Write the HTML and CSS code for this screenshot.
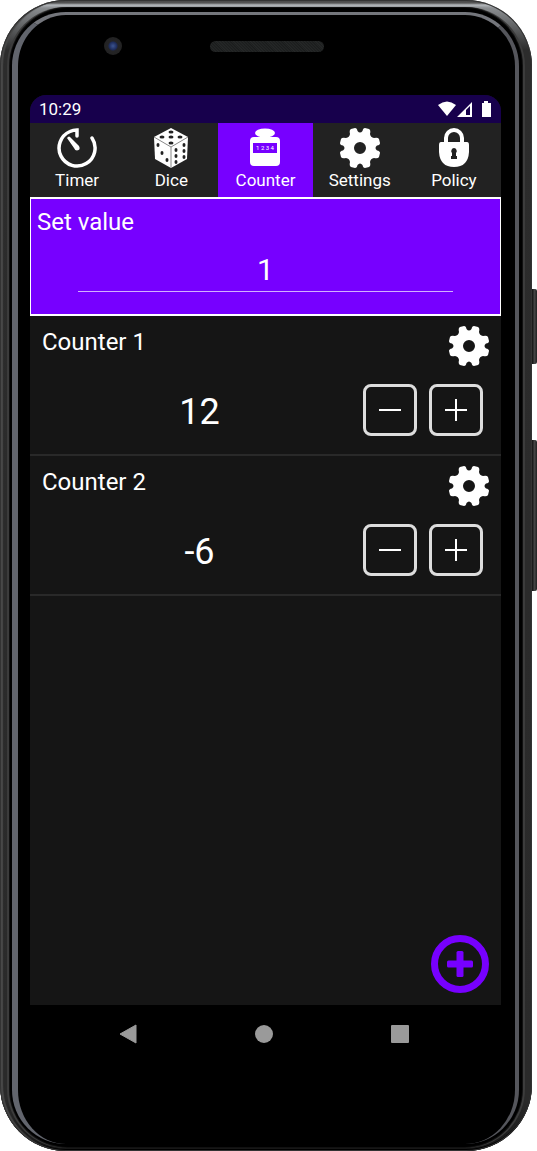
FILE: index.html
```html
<!DOCTYPE html>
<html lang="en">
<head>
  <meta charset="UTF-8">
  <meta name="viewport" content="width=device-width, initial-scale=1">
  <title>Counter</title>
  <link rel="stylesheet" href="styles.css">
</head>
<body>
  <!-- shared icons -->
  <svg class="defs" width="0" height="0" aria-hidden="true">
    <symbol id="gear" viewBox="0 0 40 40">
      <path fill="#fff" fill-rule="evenodd" d="M11 1 L15 0 Q17 0 17.500 3 Q20 6 22.500 3 Q23 0 25 0 L29 1 Q31 2 30 6 Q30.500 9.500 34 10 Q38 9 39 11 L40 15 Q40 17 37 17.500 Q34 20 37 22.500 Q40 23 40 25 L39 29 Q38 31 34 30 Q30.500 30.500 30 34 Q31 38 29 39 L25 40 Q23 40 22.500 37 Q20 34 17.500 37 Q17 40 15 40 L11 39 Q9 38 10 34 Q9.500 30.500 6 30 Q2 31 1 29 L0 25 Q0 23 3 22.500 Q6 20 3 17.500 Q0 17 0 15 L1 11 Q2 9 6 10 Q9.500 9.500 10 6 Q9 2 11 1 Z M20 14 A6 6 0 1 0 20 26 A6 6 0 1 0 20 14 Z"/>
    </symbol>
  </svg>

  <div class="phone">
    <div class="rim">
      <div class="glass">
        <div class="top">
          <div class="camera"></div>
          <div class="speaker"></div>
        </div>

        <main class="screen">
          <div class="status">
            <span>10:29</span>
            <svg width="54" height="18" viewBox="0 0 54 18" aria-hidden="true">
              <path fill="#fff" d="M0 5 Q9 -2 18 5 L9 16 Z"/>
              <path fill="#fff" fill-rule="evenodd" d="M19 17 L34 2 V17 Z M28 10 V15 H32 V6 Z"/>
              <path fill="#fff" d="M44 3 H46 V1 H50 V3 H53 V17 H44 Z"/>
            </svg>
          </div>

          <nav class="tabs">
            <button>
              <svg width="40" height="40" viewBox="0 0 40 40" aria-hidden="true">
                <path fill="none" stroke="#fff" stroke-width="3.500" stroke-linecap="round" d="M35 10 A18 18 0 1 1 13 3.500 Q16 2 20 2 V8"/>
                <path fill="#fff" d="M10 10 Q12 7 14 10 L22 18 Q24 22 20 22.500 Q18 22.500 17 20 Z"/>
              </svg>
              <span>Timer</span>
            </button>
            <button>
              <svg width="40" height="40" viewBox="0 0 40 40" aria-hidden="true">
                <path fill="#fff" d="M20 0 L37 9 L36 31 L20 40 L4 31 L3 9 Z"/>
                <path fill="none" stroke="#888" d="M3 9 L20 19 L37 9 M20 19 V40"/>
                <g fill="#222">
                  <ellipse cx="20" cy="4" rx="2.500" ry="1.500"/>
                  <ellipse cx="11" cy="9" rx="2.500" ry="1.500"/>
                  <ellipse cx="20" cy="9" rx="2.500" ry="1.500"/>
                  <ellipse cx="29" cy="9" rx="2.500" ry="1.500"/>
                  <ellipse cx="20" cy="15" rx="2.500" ry="1.500"/>
                  <ellipse cx="7" cy="17" rx="1.500" ry="2"/>
                  <ellipse cx="11" cy="25" rx="1.500" ry="2"/>
                  <ellipse cx="16" cy="32" rx="1.500" ry="2"/>
                  <ellipse cx="25" cy="22" rx="1.500" ry="2"/>
                  <ellipse cx="25" cy="28" rx="1.500" ry="2"/>
                  <ellipse cx="25" cy="34" rx="1.500" ry="2"/>
                  <ellipse cx="33" cy="17" rx="1.500" ry="2"/>
                  <ellipse cx="33" cy="23" rx="1.500" ry="2"/>
                  <ellipse cx="33" cy="29" rx="1.500" ry="2"/>
                </g>
              </svg>
              <span>Dice</span>
            </button>
            <button class="active" aria-current="page">
              <svg width="40" height="40" viewBox="0 0 40 40" aria-hidden="true">
                <ellipse cx="20" cy="5" rx="10" ry="4.500" fill="#fff"/>
                <path fill="#fff" d="M17 7 H23 V9 H31 Q35 9 35 13 V34 Q35 38 31 38 H9 Q5 38 5 34 V13 Q5 9 9 9 H17 Z"/>
                <rect x="8" y="15" width="24" height="10" fill="#7700ff"/>
                <text x="20" y="22" text-anchor="middle" class="digits">1 2 3 4</text>
              </svg>
              <span>Counter</span>
            </button>
            <button>
              <svg width="40" height="40" aria-hidden="true"><use href="#gear"/></svg>
              <span>Settings</span>
            </button>
            <button>
              <svg width="40" height="40" viewBox="0 0 40 40" aria-hidden="true">
                <path fill="none" stroke="#fff" stroke-width="4" d="M12 16 V10 A8 8 0 0 1 28 10 V16"/>
                <path fill="#fff" d="M7 14 H33 Q35 14 35 17 V24 Q34 39 20 39 Q6 39 5 24 V17 Q5 14 7 14 Z"/>
                <path fill="#222" d="M20 20 A3 3 0 0 1 22 25 V28 H23 V31 H17 V28 H18 V25 A3 3 0 0 1 20 20 Z"/>
              </svg>
              <span>Policy</span>
            </button>
          </nav>

          <section class="set-value">
            <label for="step">Set value</label>
            <input id="step" type="text" inputmode="numeric" value="1">
          </section>

          <section class="counter">
            <div class="counter-head">
              <h2>Counter 1</h2>
              <button class="gear" aria-label="Counter 1 settings"><svg width="40" height="40"><use href="#gear"/></svg></button>
            </div>
            <div class="counter-body">
              <output>12</output>
              <button class="step" aria-label="Decrease"><svg width="24" height="24" viewBox="0 0 24 24"><path d="M1 12 H23"/></svg></button>
              <button class="step" aria-label="Increase"><svg width="24" height="24" viewBox="0 0 24 24"><path d="M1 12 H23 M12 1 V23"/></svg></button>
            </div>
          </section>

          <section class="counter">
            <div class="counter-head">
              <h2>Counter 2</h2>
              <button class="gear" aria-label="Counter 2 settings"><svg width="40" height="40"><use href="#gear"/></svg></button>
            </div>
            <div class="counter-body">
              <output>-6</output>
              <button class="step" aria-label="Decrease"><svg width="24" height="24" viewBox="0 0 24 24"><path d="M1 12 H23"/></svg></button>
              <button class="step" aria-label="Increase"><svg width="24" height="24" viewBox="0 0 24 24"><path d="M1 12 H23 M12 1 V23"/></svg></button>
            </div>
          </section>

          <button class="add" aria-label="Add counter">
            <svg width="58" height="58" viewBox="0 0 58 58">
              <circle cx="29" cy="29" r="25.500" fill="none" stroke="#7700ff" stroke-width="7"/>
              <g fill="#7700ff">
                <rect x="16" y="25.500" width="26" height="7" rx="1.500"/>
                <rect x="25.500" y="16" width="7" height="26" rx="1.500"/>
              </g>
            </svg>
          </button>
        </main>

        <div class="system-nav">
          <button aria-label="Back"><svg width="20" height="20" viewBox="0 0 20 20"><path stroke="#9a9a9a" stroke-linejoin="round" d="M2 10 L18 1 V19 Z"/></svg></button>
          <button aria-label="Home"><svg width="20" height="20" viewBox="0 0 20 20"><circle cx="10" cy="10" r="9"/></svg></button>
          <button aria-label="Recent apps"><svg width="20" height="20" viewBox="0 0 20 20"><rect x="1" y="1" width="18" height="18" rx="1"/></svg></button>
        </div>
      </div>
    </div>
    <div class="side power"></div>
    <div class="side volume"></div>
  </div>
</body>
</html>
```
FILE: styles.css
```css
* {
  box-sizing: border-box;
}
body {
  margin: 0;
  background: #fff;
  color: #fff;
  font-family: Roboto, "Noto Sans", sans-serif;
}
button {
  padding: 0;
  border: none;
  background: none;
  color: inherit;
  font: inherit;
  cursor: pointer;
}
svg {
  display: block;
}
.defs {
  position: absolute;
}

/* phone body */
.phone {
  position: relative;
  display: flex;
  min-height: 100vh;
  margin-right: 5px;
  padding: 8px 10px 4px;
  border-radius: 66px;
  background: linear-gradient(#444 0, #555 3px, #b4b8bc 5px, #8a8d90 8px, #2c2c2c 50px, #2a2a2a 1100px, #161616);
  box-shadow: inset 0 0 0 1px #333, inset 3px 0 1px #484848, inset 0 -2px 0 #000;
}
.rim {
  flex: 1;
  display: flex;
  padding: 4px 3px 3px 2px;
  border-radius: 58px;
  background: #000;
  box-shadow: 0 0 0 1px #111, -2px 0 0 1px #3c3c3c, 2px 0 0 1px #3c3c3c;
}
.glass {
  flex: 1;
  display: flex;
  flex-direction: column;
  padding: 0 14px 0 12px;
  border: solid #62646b;
  border-width: 3px 4px 0 6px;
  border-color: #74767c #55565c #000 #62656d;
  border-radius: 54px;
  background: #000;
}
.top {
  display: flex;
  align-items: center;
  height: 80px;
  padding: 0 74px 18px;
}
.camera {
  width: 18px;
  height: 18px;
  border-radius: 50%;
  background: radial-gradient(circle, #3c5490 0, #1c2a58 4px, #242426 5px, #222 9px);
}
.speaker {
  width: 114px;
  height: 11px;
  margin-left: 88px;
  border-radius: 6px;
  background: repeating-linear-gradient(45deg, #262828 0, #1a1c1c 2px);
}
.side {
  position: absolute;
  left: 100%;
  width: 5px;
  border-radius: 0 2px 2px 0;
  background: linear-gradient(to right, #111, #444 50%, #222);
}
.power {
  top: 289px;
  height: 75px;
}
.volume {
  top: 440px;
  height: 151px;
}

/* app */
.screen {
  position: relative;
  flex: 1;
  overflow: hidden;
  border-radius: 16px 16px 0 0;
  background: #151515;
}
.status {
  display: flex;
  justify-content: space-between;
  align-items: center;
  height: 28px;
  padding: 0 9px;
  background: #17004c;
  font-size: 17px;
}
.tabs {
  display: grid;
  grid-template-columns: repeat(5, 1fr);
  height: 74px;
  background: #222;
}
.tabs button {
  display: flex;
  flex-direction: column;
  align-items: center;
  gap: 2px;
  padding-top: 5px;
  font-size: 17px;
  line-height: 20px;
}
.tabs .active {
  background: #7700ff;
}
.digits {
  fill: #fff;
  font-size: 6px;
}
.set-value {
  height: 119px;
  padding: 7px 6px;
  border: 1px solid #fff;
  border-top-width: 2px;
  border-bottom-width: 2px;
  background: #7700ff;
}
.set-value label {
  display: block;
  font-size: 24px;
  line-height: 32px;
}
.set-value input {
  display: block;
  width: 82%;
  height: 46px;
  margin: 8px auto 0;
  padding: 2px 0 0;
  border: none;
  border-bottom: 1px solid #d3b0ff;
  background: none;
  color: #fff;
  font: 30px Roboto, "Noto Sans", sans-serif;
  text-align: center;
}
.counter {
  height: 140px;
  padding: 10px 12px;
  border-bottom: 2px solid #292929;
}
.counter-head {
  display: flex;
  justify-content: space-between;
}
.counter-head h2 {
  margin: 0;
  font-size: 24px;
  font-weight: normal;
  line-height: 32px;
}
.counter-body {
  display: flex;
  align-items: center;
  gap: 12px;
  margin-top: 18px;
  padding: 0 6px;
}
.counter-body output {
  flex: 1;
  padding-top: 4px;
  font-size: 36px;
  text-align: center;
}
.step {
  display: grid;
  place-items: center;
  width: 54px;
  height: 52px;
  border: 3px solid #ddd;
  border-radius: 8px;
}
.step path {
  fill: none;
  stroke: #fff;
  stroke-width: 2;
}
.add {
  position: absolute;
  right: 12px;
  bottom: 12px;
}

.system-nav {
  display: flex;
  justify-content: center;
  gap: 116px;
  height: 139px;
  padding: 19px 3px 0 0;
}
.system-nav button {
  height: 20px;
}
.system-nav svg {
  fill: #9a9a9a;
}
```
